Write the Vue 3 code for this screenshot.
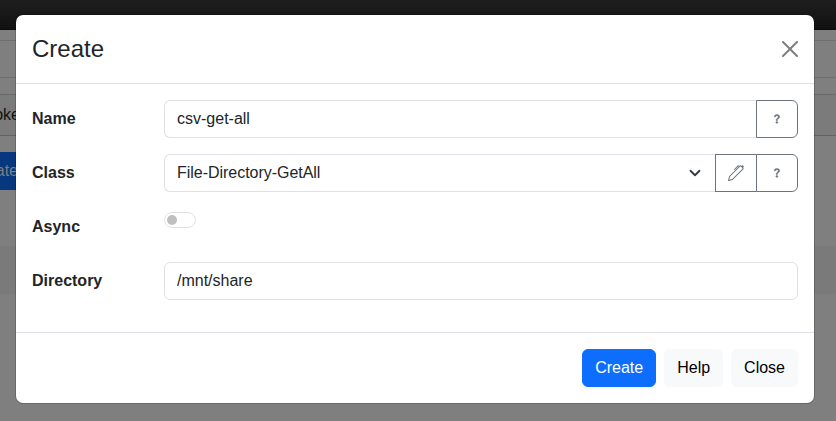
<script setup>
import { ref } from 'vue'

const name = ref('csv-get-all')
const directory = ref('/mnt/share')
const questionPath = 'M5.255 5.786a.237.237 0 0 0 .241.247h.825c.138 0 .248-.113.266-.25.09-.656.54-1.134 1.342-1.134.686 0 1.314.343 1.314 1.168 0 .635-.374.927-.965 1.371-.673.489-1.206 1.06-1.168 1.987l.003.217a.25.25 0 0 0 .25.246h.811a.25.25 0 0 0 .25-.25v-.105c0-.718.273-.927 1.01-1.486.609-.463 1.244-.977 1.244-2.056 0-1.511-1.276-2.241-2.673-2.241-1.267 0-2.655.59-2.75 2.286m1.557 5.763c0 .533.425.927 1.01.927.609 0 1.028-.394 1.028-.927 0-.552-.42-.94-1.029-.94-.584 0-1.009.388-1.009.94'
const penPath = 'm13.498.795.149-.149a1.207 1.207 0 1 1 1.707 1.708l-.149.148a1.5 1.5 0 0 1-.059 2.059L4.854 14.854a.5.5 0 0 1-.233.131l-4 1a.5.5 0 0 1-.606-.606l1-4a.5.5 0 0 1 .131-.232l9.642-9.642a.5.5 0 0 0-.642.056L6.854 4.854a.5.5 0 1 1-.708-.708L9.44.854A1.5 1.5 0 0 1 11.5.796a1.5 1.5 0 0 1 1.998-.001m-.644.766a.5.5 0 0 0-.707 0L1.95 11.756l-.764 3.057 3.057-.764L14.44 3.854a.5.5 0 0 0 0-.708z'
const closePath = 'M.293.293a1 1 0 0 1 1.414 0L8 6.586 14.293.293a1 1 0 1 1 1.414 1.414L9.414 8l6.293 6.293a1 1 0 0 1-1.414 1.414L8 9.414l-6.293 6.293a1 1 0 0 1-1.414-1.414L6.586 8 .293 1.707a1 1 0 0 1 0-1.414z'
</script>

<template>
  <div class="screen">
    <div class="page">
      <div class="navbar"></div>
      <div class="toolbar"></div>
      <div class="table-row"><span class="clip">oke</span></div>
      <div class="page-button"><span class="clip">ate</span></div>
      <div class="strip"></div>
    </div>

    <div class="modal">
      <header class="modal-header">
        <h5 class="title">Create</h5>
        <button class="close" aria-label="Close">
          <svg width="16" height="16" viewBox="0 0 16 16"><path :d="closePath" /></svg>
        </button>
      </header>

      <div class="modal-body">
        <div class="row">
          <label class="label">Name</label>
          <div class="group">
            <input v-model="name" class="control joined" type="text" spellcheck="false" />
            <button class="addon last"><svg class="question" width="16" height="16" viewBox="0 0 16 16"><path :d="questionPath" /></svg></button>
          </div>
        </div>
        <div class="row">
          <label class="label">Class</label>
          <div class="group">
            <div class="control joined select">
              <span>File-Directory-GetAll</span>
              <svg width="16" height="12" viewBox="0 0 16 16"><path d="m2 5 6 6 6-6" /></svg>
            </div>
            <button class="addon"><svg width="16" height="16" viewBox="0 0 16 16"><path :d="penPath" /></svg></button>
            <button class="addon last"><svg class="question" width="16" height="16" viewBox="0 0 16 16"><path :d="questionPath" /></svg></button>
          </div>
        </div>
        <div class="row">
          <label class="label">Async</label>
          <div class="switch"><span class="knob"></span></div>
        </div>
        <div class="row">
          <label class="label">Directory</label>
          <div class="group">
            <input v-model="directory" class="control" type="text" spellcheck="false" />
          </div>
        </div>
      </div>

      <footer class="modal-footer">
        <button class="btn primary">Create</button>
        <button class="btn">Help</button>
        <button class="btn">Close</button>
      </footer>
    </div>
  </div>
</template>

<style>
body {
  overflow: hidden;
}
</style>

<style scoped>
.screen,
.screen * {
  box-sizing: border-box;
}
.screen {
  position: relative;
  width: 836px;
  height: 421px;
  overflow: hidden;
  background: #7f7f7f;
  color: #212529;
  font: 16px/24px "Liberation Sans", Arial, sans-serif;
}
button,
input {
  font: inherit;
  margin: 0;
}
.navbar {
  height: 30px;
  background: linear-gradient(#1e1e1e, #111);
  border-bottom: 1px solid #080b0f;
}
.toolbar {
  height: 38px;
  margin-top: 10px;
  border-top: 1px solid #6e6e6e;
  border-bottom: 1px solid #6e6e6e;
}
.table-row {
  height: 42px;
  margin-top: 16px;
  padding-top: 8px;
  background: #7b7b7b;
  border-top: 1px solid #6a6a6a;
  border-bottom: 1px solid #626262;
  color: #101214;
}
.page-button {
  width: 30px;
  height: 38px;
  margin-top: 16px;
  padding-top: 7px;
  background: #06377f;
  color: #7f7f7f;
}
.clip {
  display: flex;
  justify-content: flex-end;
  width: 20px;
}
.page-button .clip {
  width: 18px;
}
.strip {
  height: 48px;
  margin-top: 56px;
  background: #7a7a7a;
}
.modal {
  position: absolute;
  left: 15px;
  top: 14px;
  width: 800px;
  border: 1px solid rgba(0, 0, 0, 0.175);
  border-radius: 8px;
  background: #fff;
  background-clip: padding-box;
}
.modal-header {
  display: flex;
  align-items: center;
  justify-content: space-between;
  height: 69px;
  padding: 0 16px;
  border-bottom: 1px solid #dee2e6;
}
.title {
  margin: 0;
  font-size: 24px;
  font-weight: 400;
  line-height: 36px;
}
.close {
  display: flex;
  padding: 0;
  border: 0;
  background: none;
  opacity: 0.5;
}
.modal-body {
  display: flex;
  flex-direction: column;
  gap: 16px;
  height: 248px;
  padding: 16px;
}
.row {
  display: flex;
  height: 38px;
}
.label {
  width: 132px;
  padding-top: 7px;
  font-weight: 700;
}
.group {
  display: flex;
  flex: 1;
  min-width: 0;
}
.control {
  flex: 1;
  min-width: 0;
  height: 38px;
  padding: 6px 12px;
  border: 1px solid #dee2e6;
  border-radius: 6px;
  background: #fff;
  color: #212529;
  outline: 0;
}
.joined {
  border-right: 0;
  border-radius: 6px 0 0 6px;
}
.select {
  display: flex;
  align-items: center;
  justify-content: space-between;
}
.select span {
  letter-spacing: -0.03px;
}
.select svg {
  fill: none;
  stroke: #343a40;
  stroke-width: 2.4;
  stroke-linecap: round;
  stroke-linejoin: round;
}
.addon {
  display: flex;
  align-items: center;
  justify-content: center;
  width: 42px;
  height: 38px;
  padding: 0;
  border: 1px solid #6c757d;
  background: #fff;
}
.addon svg {
  fill: #6c757d;
}
.addon .question {
  stroke: #6c757d;
  stroke-width: 0.4;
}
.addon.last {
  border-radius: 0 6px 6px 0;
}
.addon + .addon {
  margin-left: -1px;
}
.switch {
  display: flex;
  align-items: center;
  width: 32px;
  height: 16px;
  margin-top: 4px;
  padding-left: 1.5px;
  border: 1px solid #dee2e6;
  border-radius: 8px;
}
.knob {
  width: 10.5px;
  height: 10.5px;
  border-radius: 50%;
  background: #bfbfbf;
}
.modal-footer {
  display: flex;
  justify-content: flex-end;
  gap: 8px;
  height: 71px;
  padding: 16px;
  border-top: 1px solid #dee2e6;
}
.btn {
  height: 38px;
  padding: 6px 12px;
  border: 1px solid #f8f9fa;
  border-radius: 6px;
  background: #f8f9fa;
  color: #000;
}
.btn.primary {
  border-color: #0d6efd;
  background: #0d6efd;
  color: #fff;
}
</style>
